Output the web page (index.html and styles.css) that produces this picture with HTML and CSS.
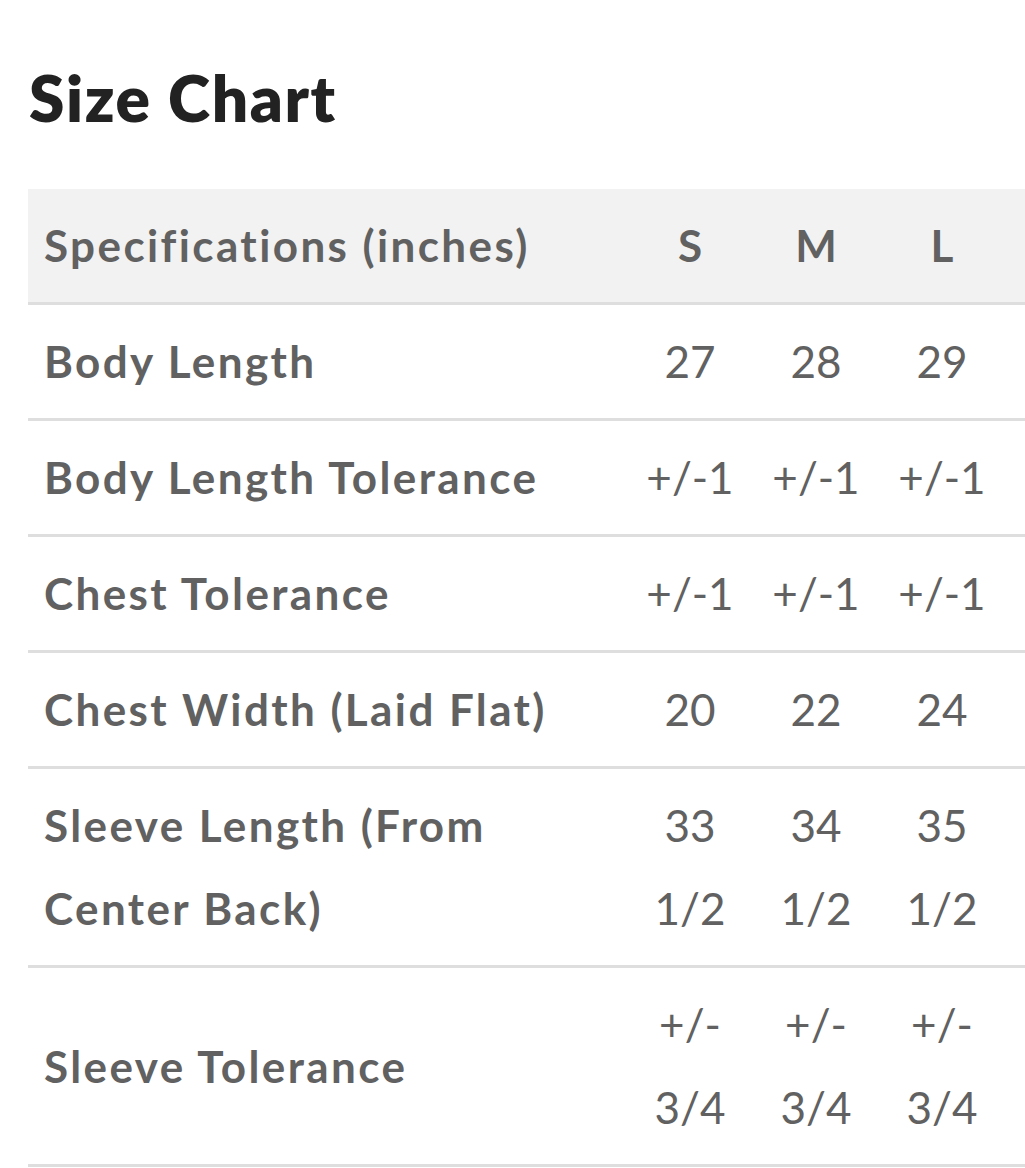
FILE: index.html
```html
<!DOCTYPE html>
<html lang="en">
<head>
<meta charset="utf-8">
<title>Size Chart</title>
<link rel="stylesheet" href="styles.css">
</head>
<body>
<main class="page">
  <h1 class="title">Size Chart</h1>
  <table class="chart">
    <colgroup>
      <col class="col-label">
      <col class="col-size">
      <col class="col-size">
      <col class="col-size-last">
    </colgroup>
    <thead>
      <tr>
        <th class="label">Specifications (inches)</th>
        <th class="val">S</th>
        <th class="val">M</th>
        <th class="val last">L</th>
      </tr>
    </thead>
    <tbody>
      <tr>
        <td class="label">Body Length</td>
        <td class="val">27</td>
        <td class="val">28</td>
        <td class="val last">29</td>
      </tr>
      <tr>
        <td class="label">Body Length Tolerance</td>
        <td class="val">+/-1</td>
        <td class="val">+/-1</td>
        <td class="val last">+/-1</td>
      </tr>
      <tr>
        <td class="label">Chest Tolerance</td>
        <td class="val">+/-1</td>
        <td class="val">+/-1</td>
        <td class="val last">+/-1</td>
      </tr>
      <tr>
        <td class="label">Chest Width (Laid Flat)</td>
        <td class="val">20</td>
        <td class="val">22</td>
        <td class="val last">24</td>
      </tr>
      <tr>
        <td class="label">Sleeve Length (From Center Back)</td>
        <td class="val">33 1/2</td>
        <td class="val">34 1/2</td>
        <td class="val last">35 1/2</td>
      </tr>
      <tr>
        <td class="label">Sleeve Tolerance</td>
        <td class="val">+/- 3/4</td>
        <td class="val">+/- 3/4</td>
        <td class="val last">+/- 3/4</td>
      </tr>
    </tbody>
  </table>
</main>
</body>
</html>
```

FILE: styles.css
```css
html, body {
  margin: 0;
  padding: 0;
  background: #ffffff;
  overflow-x: hidden;
}

.page {
  padding: 0 0 0 28px;
  font-family: Lato, "Open Sans", "Liberation Sans", sans-serif;
}

.title {
  margin: 0;
  padding: 58px 0 0 1px;
  font-size: 64px;
  line-height: 80px;
  font-weight: 800;
  color: #222222;
  letter-spacing: 1.6px;
}

.chart {
  margin-top: 51px;
  width: 997px;
  border-collapse: collapse;
  table-layout: fixed;
  color: #616161;
  font-size: 44px;
  line-height: 83px;
}

.col-size { width: 126px; }
.col-size-last { width: 146px; }

.chart thead tr {
  background: #f2f2f2;
}

.chart tr {
  border-bottom: 3px solid #dedede;
}

.chart th,
.chart td {
  padding: 15px 0;
  vertical-align: middle;
}

.label {
  text-align: left;
  padding-left: 16px !important;
  padding-right: 16px !important;
  font-weight: 700;
  letter-spacing: 2.4px;
}

.val {
  text-align: center;
  font-weight: 400;
  padding-left: 8px !important;
  padding-right: 8px !important;
}

th.val {
  font-weight: 700;
}

.val.last {
  padding-right: 28px !important;
}
```
